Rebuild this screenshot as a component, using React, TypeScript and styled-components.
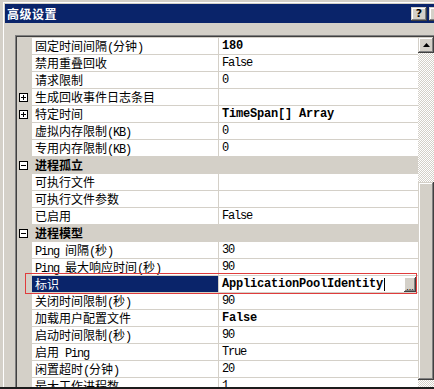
import styled, { createGlobalStyle } from "styled-components";

type Prop = {
  name: string;
  value?: string;
  bold?: boolean;
  expand?: "plus" | "minus";
  category?: boolean;
  selected?: boolean;
};

const rows: Prop[] = [
  { name: "固定时间间隔(分钟)", value: "180", bold: true },
  { name: "禁用重叠回收", value: "False" },
  { name: "请求限制", value: "0" },
  { name: "生成回收事件日志条目", expand: "plus" },
  { name: "特定时间", value: "TimeSpan[] Array", bold: true, expand: "plus" },
  { name: "虚拟内存限制(KB)", value: "0" },
  { name: "专用内存限制(KB)", value: "0" },
  { name: "进程孤立", category: true, expand: "minus" },
  { name: "可执行文件" },
  { name: "可执行文件参数" },
  { name: "已启用", value: "False" },
  { name: "进程模型", category: true, expand: "minus" },
  { name: "Ping 间隔(秒)", value: "30" },
  { name: "Ping 最大响应时间(秒)", value: "90" },
  { name: "标识", value: "ApplicationPoolIdentity", bold: true, selected: true },
  { name: "关闭时间限制(秒)", value: "90" },
  { name: "加载用户配置文件", value: "False", bold: true },
  { name: "启动时间限制(秒)", value: "90" },
  { name: "启用 Ping", value: "True" },
  { name: "闲置超时(分钟)", value: "20" },
  { name: "最大工作进程数", value: "1" },
];

// latin runs are drawn narrow (half width), like the bitmap font in the dialog
function Label({ text }: { text: string }) {
  const parts = text.split(/([\x20-\x7e]+)/).filter(Boolean);
  return (
    <>
      {parts.map((p, i) =>
        /^[\x20-\x7e]+$/.test(p) ? <Latin key={i}>{p}</Latin> : <span key={i}>{p}</span>
      )}
    </>
  );
}

function Glyph({ kind }: { kind: "plus" | "minus" }) {
  return (
    <Box>
      <svg width="9" height="9" viewBox="0 0 9 9">
        <rect x="0.5" y="0.5" width="8" height="8" fill="#fff" stroke="#000" />
        <line x1="2" y1="4.5" x2="7" y2="4.5" stroke="#000" />
        {kind === "plus" && <line x1="4.5" y1="2" x2="4.5" y2="7" stroke="#000" />}
      </svg>
    </Box>
  );
}

export default function App() {
  return (
    <>
      <GlobalStyle />
      <Page>
        <Window>
          <TitleBar>
            <Title>高级设置</Title>
            <CapButton>?</CapButton>
            <CapButton />
          </TitleBar>
          <Grid>
            <RowsArea>
              {rows.map((r, i) => (
                <Row key={i} $category={r.category}>
                  <Gutter>{r.expand && <Glyph kind={r.expand} />}</Gutter>
                  {r.category ? (
                    <CategoryName>{r.name}</CategoryName>
                  ) : (
                    <>
                      <Name $selected={r.selected}>
                        <Label text={r.name} />
                      </Name>
                      <Value $bold={r.bold}>
                        {r.value}
                        {r.selected && (
                          <>
                            <Caret />
                            <DotsButton>...</DotsButton>
                          </>
                        )}
                      </Value>
                    </>
                  )}
                </Row>
              ))}
              <Highlight />
            </RowsArea>
            <ScrollBar>
              <ArrowButton>
                <svg width="7" height="4" viewBox="0 0 7 4">
                  <polygon points="3.5,0 7,4 0,4" fill="#000" />
                </svg>
              </ArrowButton>
              <Track $h={129} />
              <Thumb />
              <Track />
            </ScrollBar>
          </Grid>
        </Window>
      </Page>
    </>
  );
}

const GlobalStyle = createGlobalStyle`
  html, body {
    margin: 0;
    padding: 0;
    background: #d4d0c8;
  }
  * {
    box-sizing: border-box;
  }
`;

const Page = styled.div`
  width: 434px;
  height: 389px;
  overflow: hidden;
  background: #d4d0c8;
  border-bottom: 2px solid #1c1c1c;
  font-family: "Noto Sans CJK SC", sans-serif;
  font-size: 12px;
`;

const Window = styled.div`
  width: 443px;
  margin: 2px 0 0 3px;
  padding: 1px 0 0 1px;
  border-top: 1px solid #fff;
  border-left: 1px solid #fff;
`;

const TitleBar = styled.div`
  height: 19px;
  background: #0a246a;
  display: flex;
  align-items: center;
  padding: 0 1px 0 2px;
  gap: 2px;
`;

const Title = styled.div`
  flex: 1;
  color: #fff;
  font-weight: bold;
  font-size: 12px;
  line-height: 19px;
  letter-spacing: 0.5px;
`;

const CapButton = styled.div`
  width: 16px;
  height: 14px;
  background: #d4d0c8;
  box-shadow: inset -1px -1px #404040, inset 1px 1px #d4d0c8,
    inset -2px -2px #808080, inset 2px 2px #fff;
  font-family: "DejaVu Sans", sans-serif;
  font-weight: bold;
  font-size: 11px;
  line-height: 14px;
  text-align: center;
  color: #000;
`;

const Grid = styled.div`
  margin: 12px 0 0 10px;
  width: 421px;
  height: 352px;
  display: flex;
  border-top: 1px solid #808080;
  border-left: 1px solid #808080;
  box-shadow: inset 1px 1px #404040;
  padding: 1px 0 0 1px;
`;

const RowsArea = styled.div`
  position: relative;
  width: 401px;
  height: 350px;
  overflow: hidden;
  display: flex;
  flex-direction: column;
`;

const Row = styled.div<{ $category?: boolean }>`
  flex: none;
  display: grid;
  grid-template-columns: 15px 187px 199px;
  height: 17px;
  border-top: 1px solid #d4d0c8;
  background: ${(p) => (p.$category ? "#d4d0c8" : "#fff")};
  line-height: 16px;
`;

const Gutter = styled.div`
  background: #d4d0c8;
  display: flex;
  align-items: center;
  padding-left: 2px;
`;

const Box = styled.span`
  display: block;
  width: 9px;
  height: 9px;
  & > svg {
    display: block;
  }
`;

const Name = styled.div<{ $selected?: boolean }>`
  padding-left: 3px;
  border-right: 1px solid #d4d0c8;
  background: ${(p) => (p.$selected ? "#0a246a" : "#fff")};
  color: ${(p) => (p.$selected ? "#fff" : "#000")};
  white-space: nowrap;
  overflow: hidden;
`;

const CategoryName = styled.div`
  grid-column: 2 / -1;
  padding-left: 3px;
  font-weight: bold;
  color: #000;
`;

const Latin = styled.span`
  font-family: "Liberation Mono", monospace;
  letter-spacing: -1.2px;
`;

const Value = styled.div<{ $bold?: boolean }>`
  display: flex;
  align-items: center;
  padding: 0 2px 0 3px;
  font-family: "Liberation Mono", monospace;
  font-weight: ${(p) => (p.$bold ? "bold" : "normal")};
  letter-spacing: ${(p) => (p.$bold ? "-0.2px" : "-1.2px")};
  color: #000;
  white-space: nowrap;
`;

const Caret = styled.span`
  width: 1px;
  height: 13px;
  background: #000;
  margin-left: 1px;
`;

const DotsButton = styled.span`
  margin-left: auto;
  align-self: flex-end;
  width: 12px;
  height: 15px;
  background: #d4d0c8;
  box-shadow: inset -1px -1px #404040, inset 1px 1px #fff, inset -2px -2px #808080;
  font-family: "Liberation Sans", sans-serif;
  font-weight: normal;
  font-size: 9px;
  letter-spacing: 0;
  line-height: 20px;
  text-align: center;
  color: #000;
  overflow: hidden;
`;

const Highlight = styled.div`
  position: absolute;
  left: 8px;
  top: 236px;
  width: 392px;
  height: 21px;
  border: 1px solid #e03c3c;
  pointer-events: none;
`;

const ScrollBar = styled.div`
  width: 16px;
  height: 350px;
  display: flex;
  flex-direction: column;
`;

const ArrowButton = styled.div`
  flex: none;
  height: 16px;
  background: #d4d0c8;
  box-shadow: inset -1px -1px #404040, inset 1px 1px #d4d0c8,
    inset -2px -2px #808080, inset 2px 2px #fff;
  display: flex;
  align-items: center;
  justify-content: center;
  padding-bottom: 1px;
  & > svg {
    display: block;
  }
`;

const Track = styled.div<{ $h?: number }>`
  flex: ${(p) => (p.$h ? `none` : 1)};
  height: ${(p) => (p.$h ? `${p.$h}px` : "auto")};
  background-image: conic-gradient(#fff 25%, #d4d0c8 0 50%, #fff 0 75%, #d4d0c8 0);
  background-size: 2px 2px;
`;

const Thumb = styled.div`
  flex: none;
  height: 198px;
  background: #d4d0c8;
  box-shadow: inset -1px -1px #404040, inset 1px 1px #d4d0c8,
    inset -2px -2px #808080, inset 2px 2px #fff;
`;
